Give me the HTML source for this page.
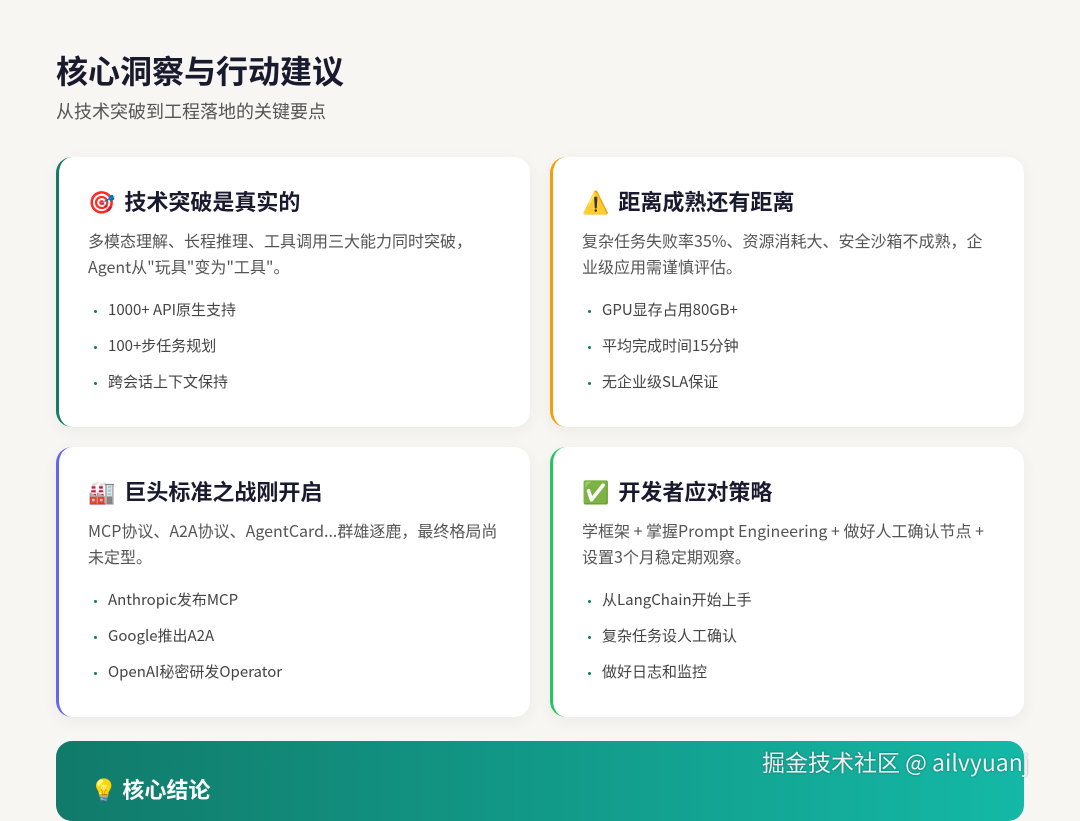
<!DOCTYPE html>
<html><head><meta charset="utf-8"><style>
*{margin:0;padding:0;box-sizing:border-box}
body{width:1080px;height:800px;overflow:hidden;background:#f8f6f2;font-family:"Noto Sans CJK SC","Liberation Sans",sans-serif;position:relative}
h1{position:absolute;left:56px;top:48px;font-size:32px;font-weight:700;color:#1a1a2e;line-height:44px}
.sub{position:absolute;left:56px;top:98px;font-size:18px;color:#555;line-height:26px}
.card{position:absolute;width:474px;height:270px;background:#fff;border-radius:16px;box-shadow:0 4px 16px rgba(0,0,0,0.05);padding:30px 30px 0 29px}
.card h2{font-size:22px;font-weight:700;color:#1a1a2e;height:30px;line-height:30px;margin-top:-1px}
.card h2 span{margin-right:9px}
.card p{font-size:16px;color:#555;line-height:26px;margin-top:11px}
.card ul{list-style:none;margin-top:13px}
.card li{font-size:15px;color:#444;height:36px;line-height:36px;padding-left:20px;position:relative}
.card li:before{content:"";position:absolute;left:6px;top:18px;width:3px;height:3px;border-radius:50%;background:#117a6a}
.ban{position:absolute;left:56px;top:741px;width:968px;height:80px;border-radius:16px;background:linear-gradient(90deg,#117a6a,#14b8a6)}
.ban h3{position:absolute;left:34px;top:32px;font-size:22px;color:#fff;font-weight:700}
.wm{position:absolute;left:762px;top:744px;font-size:23px;color:#f0f0f0;text-shadow:0 0 2px rgba(0,0,0,.4)}
</style></head><body>
<h1>核心洞察与行动建议</h1>
<div class="sub">从技术突破到工程落地的关键要点</div>
<div class="card" style="left:56px;top:157px;border-left:3px solid #117a6a">
<h2><span>🎯</span>技术突破是真实的</h2>
<p>多模态理解、长程推理、工具调用三大能力同时突破，Agent从"玩具"变为"工具"。</p>
<ul><li>1000+ API原生支持</li><li>100+步任务规划</li><li>跨会话上下文保持</li></ul></div>
<div class="card" style="left:550px;top:157px;border-left:3px solid #f59e0b">
<h2><span>⚠️</span>距离成熟还有距离</h2>
<p>复杂任务失败率35%、资源消耗大、安全沙箱不成熟，企业级应用需谨慎评估。</p>
<ul><li>GPU显存占用80GB+</li><li>平均完成时间15分钟</li><li>无企业级SLA保证</li></ul></div>
<div class="card" style="left:56px;top:447px;border-left:3px solid #6366f1">
<h2><span>🏭</span>巨头标准之战刚开启</h2>
<p>MCP协议、A2A协议、AgentCard...群雄逐鹿，最终格局尚未定型。</p>
<ul><li>Anthropic发布MCP</li><li>Google推出A2A</li><li>OpenAI秘密研发Operator</li></ul></div>
<div class="card" style="left:550px;top:447px;border-left:3px solid #22c55e">
<h2><span>✅</span>开发者应对策略</h2>
<p>学框架 + 掌握Prompt Engineering + 做好人工确认节点 + 设置3个月稳定期观察。</p>
<ul><li>从LangChain开始上手</li><li>复杂任务设人工确认</li><li>做好日志和监控</li></ul></div>
<div class="ban"><h3>💡 核心结论</h3></div>
<div class="wm">掘金技术社区 @ ailvyuanj</div>
</body></html>
